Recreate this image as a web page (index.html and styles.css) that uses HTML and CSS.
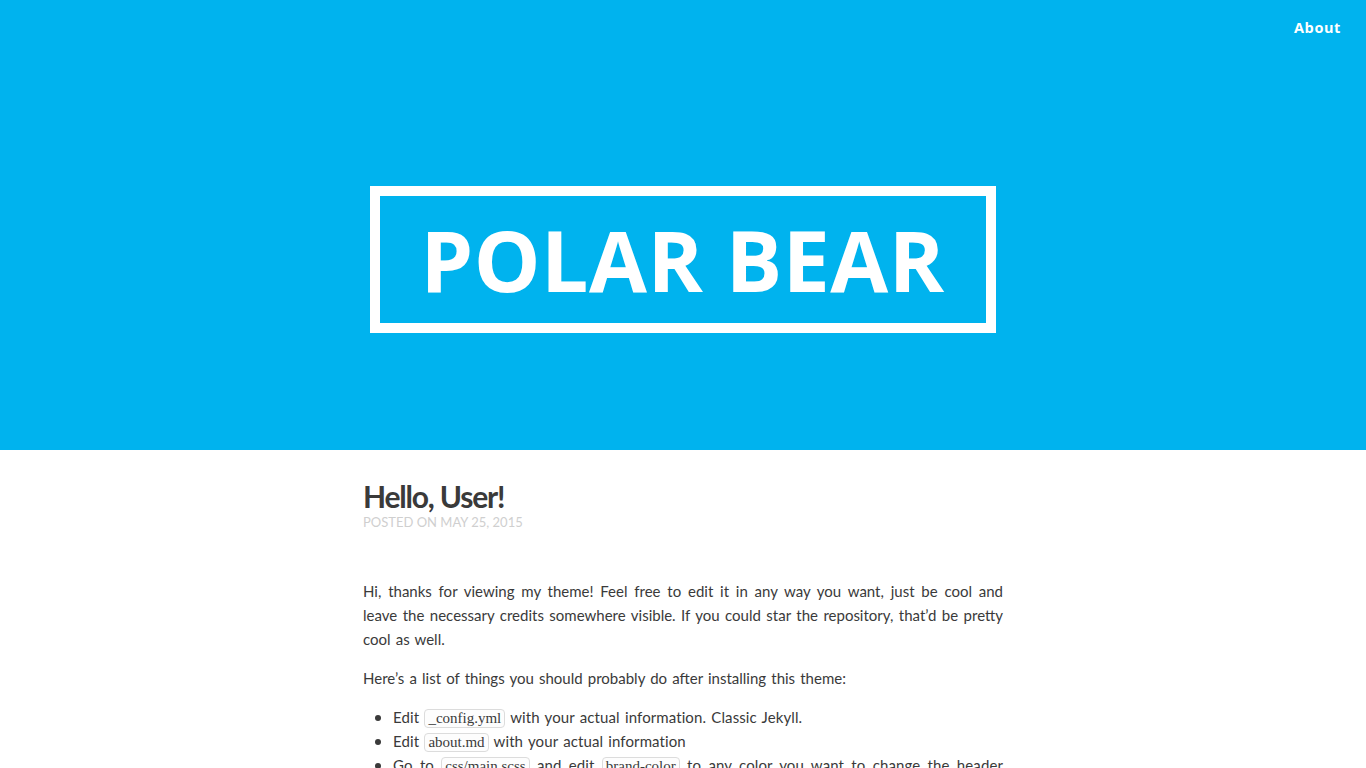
FILE: index.html
```html
<!DOCTYPE html>
<html lang="en">
<head>
<meta charset="utf-8">
<title>Polar Bear</title>
<link rel="stylesheet" href="styles.css">
</head>
<body>
<header class="site-header">
  <nav class="site-nav">
    <a class="nav-link" href="#">About</a>
  </nav>
  <div class="title-wrap">
    <h1 class="site-title">POLAR BEAR</h1>
  </div>
</header>
<main class="content">
  <article class="post">
    <h2 class="post-title">Hello, User!</h2>
    <p class="post-meta">POSTED ON MAY 25, 2015</p>
    <p class="para">Hi, thanks for viewing my theme! Feel free to edit it in any way you want, just be cool and leave the necessary credits somewhere visible. If you could star the repository, that’d be pretty cool as well.</p>
    <p class="para">Here’s a list of things you should probably do after installing this theme:</p>
    <ul class="todo">
      <li>Edit <code>_config.yml</code> with your actual information. Classic Jekyll.</li>
      <li>Edit <code>about.md</code> with your actual information</li>
      <li>Go to <code>css/main.scss</code> and edit <code>brand-color</code> to any color you want to change the header color.</li>
    </ul>
  </article>
</main>
</body>
</html>
```
FILE: styles.css
```css
html, body {
  margin: 0;
  padding: 0;
}
body {
  font-family: Lato, "Open Sans", sans-serif;
  color: #3a3a3a;
  background: #fff;
}
.site-header {
  background: #00b3ee;
  height: 450px;
  display: flex;
  flex-direction: column;
}
.site-nav {
  display: flex;
  justify-content: flex-end;
  padding: 18px 25px 0 0;
}
.nav-link {
  color: #fff;
  text-decoration: none;
  font-family: "Open Sans", sans-serif;
  font-weight: 700;
  font-size: 14.5px;
  letter-spacing: 0.6px;
  line-height: 20px;
}
.title-wrap {
  display: flex;
  justify-content: center;
  padding-top: 148px;
}
.site-title {
  margin: 0;
  border: 10px solid #fff;
  color: #fff;
  font-family: "Open Sans", sans-serif;
  font-weight: 700;
  font-size: 84px;
  letter-spacing: 0.5px;
  line-height: 127px;
  padding: 0 41px 0 40px;
  white-space: nowrap;
}
.content {
  display: flex;
  justify-content: center;
}
.post {
  width: 640px;
  padding-top: 28px;
}
.post-title {
  margin: 0;
  font-size: 30px;
  line-height: 36px;
  font-weight: 700;
  letter-spacing: -1.2px;
  color: #3a3a3a;
}
.post-meta {
  margin: 0 0 49px;
  font-size: 13px;
  line-height: 16px;
  color: #cfcfcf;
}
.para {
  margin: 0 0 15px;
  font-size: 15px;
  letter-spacing: 0;
  word-spacing: 1.3px;
  line-height: 24px;
  text-align: justify;
}
.todo {
  margin: 0;
  padding-left: 30px;
  font-size: 15px;
  letter-spacing: 0.1px;
  word-spacing: 1.3px;
  line-height: 24px;
  text-align: justify;
}
.todo li::marker {
  font-size: 17px;
}
code {
  font-family: "Liberation Serif", serif;
  font-size: 15px;
  line-height: 17px;
  letter-spacing: 0;
  word-spacing: 0;
  background: #fdfdfd;
  border: 1px solid #dcdcdc;
  border-radius: 4px;
  padding: 0 3px;
  display: inline-block;
  vertical-align: baseline;
}
```
